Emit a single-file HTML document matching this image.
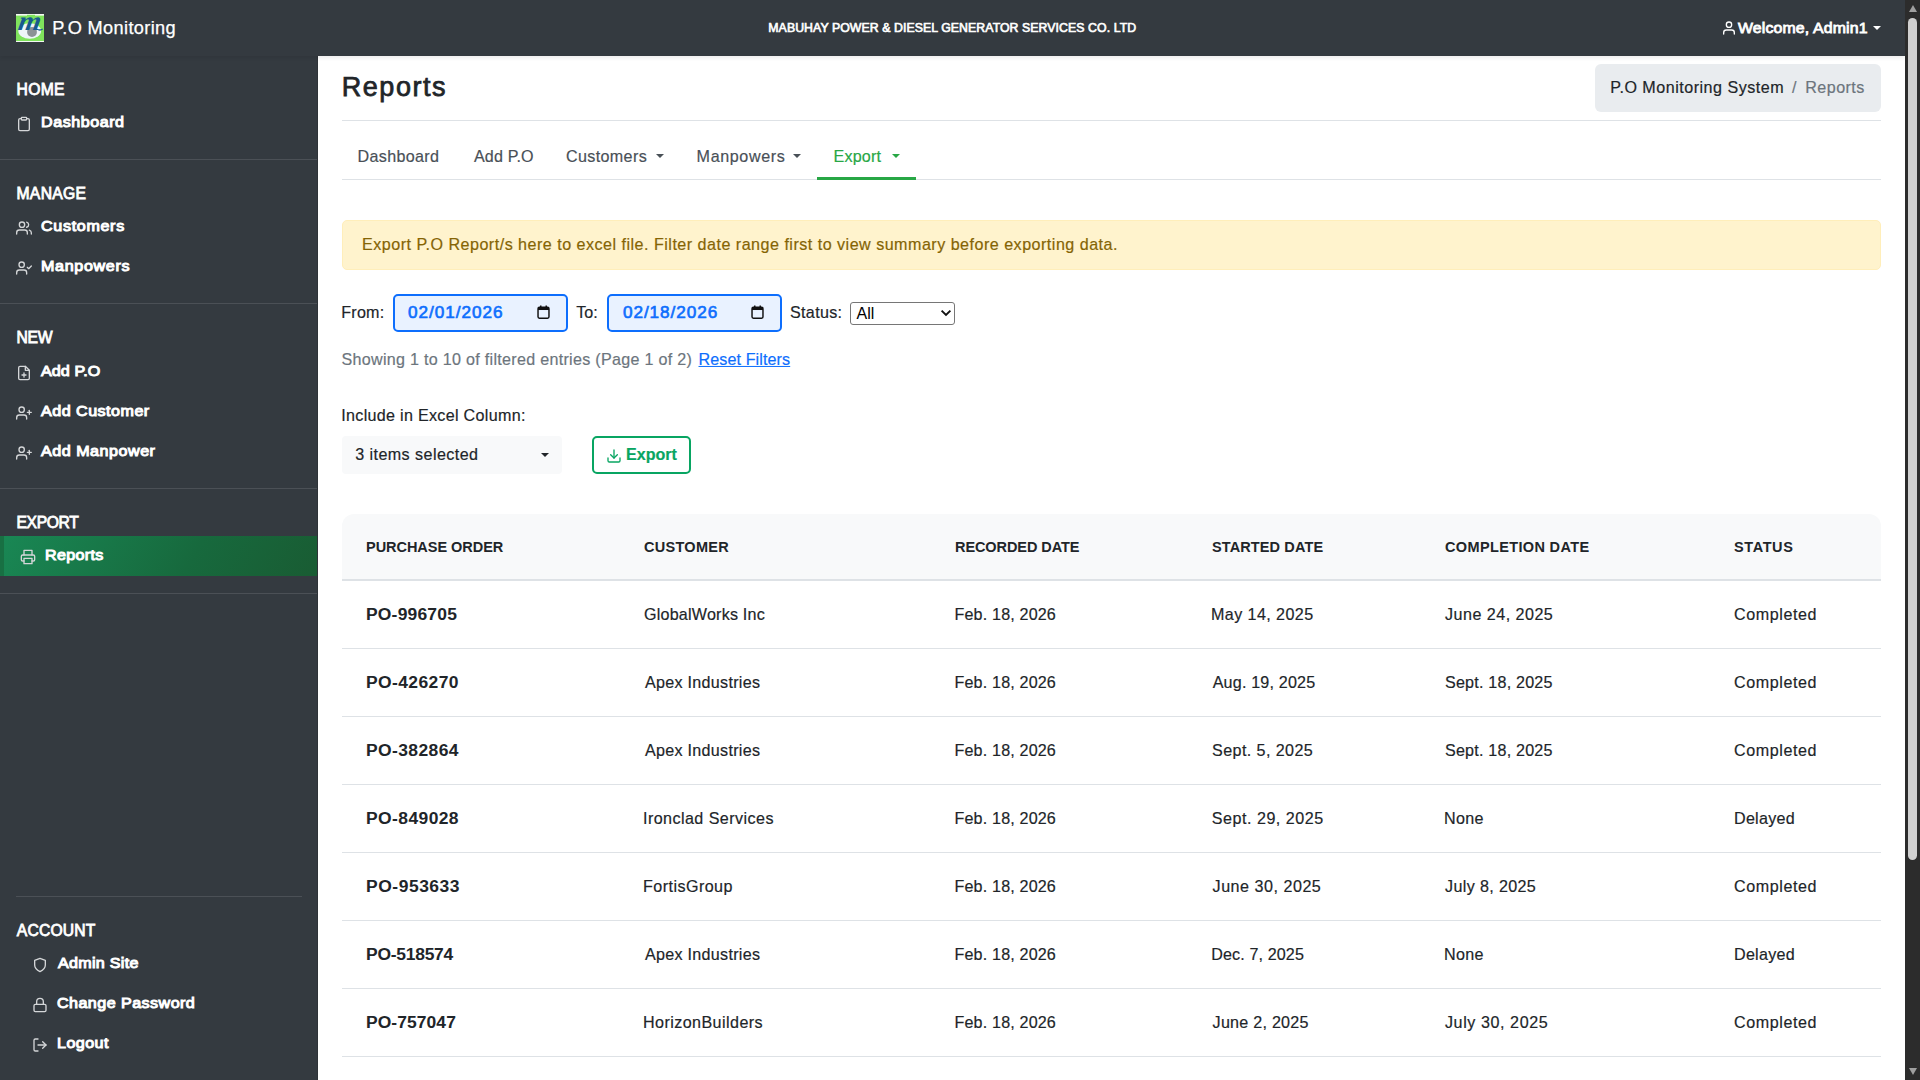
<!DOCTYPE html>
<html lang="en">
<head>
<meta charset="utf-8">
<title>Reports - P.O Monitoring</title>
<style>
*{box-sizing:border-box;margin:0;padding:0}
html,body{width:1920px;height:1080px;overflow:hidden;background:#fff}
body{font-family:"Liberation Sans",sans-serif;font-size:16px;color:#212529;position:relative}
a{text-decoration:none;color:inherit}
svg{display:block}
.abs{position:absolute}
.t{position:absolute;white-space:nowrap;line-height:1;transform:translateY(-50%) scaleX(var(--sx,1));transform-origin:0 50%}
.ic{position:absolute;fill:none;stroke-width:2;stroke-linecap:round;stroke-linejoin:round}

/* top navbar */
#nav{position:absolute;left:0;top:0;width:1905px;height:56px;background:#343a40;z-index:5;box-shadow:0 2px 4px rgba(0,0,0,.075)}
#nav .t{color:#fff}
#nav .ic{stroke:#fff}
#brand{font-size:18.2px;-webkit-text-stroke:.25px}
#company{font-size:12.3px;font-weight:400;-webkit-text-stroke:.65px}
#welcome{--sx:1.05;font-size:15.1px;font-weight:400;-webkit-text-stroke:.8px}
.caret{position:absolute;width:0;height:0;border-left:4px solid transparent;border-right:4px solid transparent;border-top:4px solid currentColor}

/* sidebar */
#side{position:absolute;left:0;top:56px;width:318px;height:1024px;background:#343a40;z-index:3;border-right:1px solid #2e3338}
#side .t{color:#fff;font-weight:400;font-size:15.1px;-webkit-text-stroke:.8px}
#side .t.hd{font-size:15.7px}
#side .t.it{--sx:1.08;margin-top:-.8px;font-size:14.9px;-webkit-text-stroke:1px}
#side .ic{stroke:#d4d6d8}
#side .hr{position:absolute;height:1px;background:#4b5056}
#active{position:absolute;left:0;top:480px;width:317px;height:40px;background:linear-gradient(120deg,#198754 0%,#17693d 60%,#195c33 100%);border-left:4px solid #187043}

/* main */
#main{position:absolute;left:318px;top:56px;width:1587px;height:1024px;background:#fff}
#main .t{color:#212529;font-size:16.1px;-webkit-text-stroke:.18px;margin-top:-.7px}
#main #statusval{font-size:16px;-webkit-text-stroke:0;letter-spacing:0!important;margin-top:0}
#main #h1,#main .dtx,#main #exporttxt{margin-top:0}
.line{position:absolute;left:24px;width:1539px;height:1px;background:#dee2e6}
#main #h1{font-size:27px;font-weight:400;-webkit-text-stroke:.75px}
#bc{position:absolute;left:1277px;top:8px;width:286px;height:48px;background:#e9ecef;border-radius:6px}
#main .tab{color:#495057}
#main .tab.on{color:#28a745}
#tabline{position:absolute;left:499px;top:121px;width:99px;height:3px;background:#28a745}
#alert{position:absolute;left:24px;top:164px;width:1539px;height:50px;background:#fff3cd;border:1px solid #ffeeba;border-radius:5px}
#main #alerttxt{color:#856404}
.date{position:absolute;top:238px;width:174.5px;height:37.5px;border:2px solid #0d6efd;border-radius:5px;background:#e9f2ff}
#main .dtx{--sx:1.1;color:#0d6efd;font-size:15.6px;font-weight:400;-webkit-text-stroke:.6px}
.cal{position:absolute;fill:none;stroke:#111;stroke-width:1.6}
#status{position:absolute;left:532px;top:246px;width:105px;height:23px;border:1px solid #767676;border-radius:3px;background:#fff}
#main #showing{color:#6c757d}
#main #reset{color:#0d6efd;text-decoration:underline}
#multi{position:absolute;left:24px;top:380px;width:220px;height:38px;background:#f8f9fa;border-radius:4px}
#export{position:absolute;left:274px;top:380px;width:99px;height:38px;border:2px solid #08a562;border-radius:5px;background:#fff}
#main #exporttxt{color:#08a562;font-weight:700;font-size:16px;-webkit-text-stroke:.2px}
#export .ic{stroke:#08a562}

/* table */
#tbl{position:absolute;left:24px;top:458px;width:1539px;border-collapse:separate;border-spacing:0;table-layout:fixed}
#tbl th{height:67px;font-size:14.5px;background:#f8f9fa;border-bottom:2px solid #dee2e6;text-align:left;font-weight:700;padding:0;vertical-align:middle;white-space:nowrap}
#tbl th:first-child{border-top-left-radius:12px}
#tbl th:last-child{border-top-right-radius:12px}
#tbl td{height:68px;border-bottom:1px solid #dee2e6;padding:0;vertical-align:middle;font-size:16.1px;white-space:nowrap;-webkit-text-stroke:.18px}
#tbl td:first-child{font-weight:700;font-size:16px;-webkit-text-stroke:0}
#tbl td:first-child .m{display:inline-block;transform:scaleX(1.09);transform-origin:0 50%}
#tbl th:nth-child(1),#tbl td:nth-child(1){padding-left:24px}

/* scrollbar */
#sb{position:absolute;left:1905px;top:0;width:15px;height:1080px;background:#2c2c2c;z-index:9}
#sb .th{position:absolute;left:3px;top:18px;width:9px;height:842px;border-radius:5px;background:#d0d0d0}
#sb .up{position:absolute;left:3.5px;top:5px;width:0;height:0;border-left:4.5px solid transparent;border-right:4.5px solid transparent;border-bottom:7px solid #a0a0a0}
#sb .dn{position:absolute;left:3.5px;top:1068px;width:0;height:0;border-left:4.5px solid transparent;border-right:4.5px solid transparent;border-top:7px solid #a0a0a0}

</style>
</head>
<body>
<nav id="nav">
<svg class="abs" style="left:16px;top:14px" width="28" height="28" viewBox="0 0 28 28">
<rect width="28" height="28" fill="#f4f8f4"/>
<rect x="0" y="1.6" width="28" height="25.4" fill="#7fe35c"/>
<rect x="11" y=".8" width="8" height="1.2" fill="#7fe35c"/>
<ellipse cx="13.7" cy="17" rx="11.4" ry="7.8" fill="#eef5f8"/>
<circle cx="16" cy="18" r="4.9" fill="#8b9296"/>
<text transform="translate(1.2,16.4) skewX(-10)" font-family="Liberation Serif,serif" font-style="italic" font-weight="700" font-size="27" textLength="22.5" lengthAdjust="spacingAndGlyphs" fill="#175a8e">m</text><path d="M22.3 15.6q2 1 4.4-.6" fill="none" stroke="#175a8e" stroke-width="1.3"/>
</svg>
<a class="t " id="brand" style="left:52.2px;top:28px;letter-spacing:0.342px;">P.O Monitoring</a>
<span class="t " id="company" style="left:768.3px;top:27.7px;letter-spacing:0.07px;">MABUHAY POWER &amp; DIESEL GENERATOR SERVICES CO. LTD</span>
<svg class="ic" style="left:1721px;top:20px" width="16" height="16" viewBox="0 0 24 24"><path d="M20 21v-2a4 4 0 0 0-4-4H8a4 4 0 0 0-4 4v2"/><circle cx="12" cy="7" r="4"/></svg>
<span class="t " id="welcome" style="left:1738.0px;top:27.5px;letter-spacing:0.143px;">Welcome, Admin1</span>
<i class="caret" style="left:1873px;top:26px;color:#fff"></i>
</nav>
<aside id="side">
<div id="active"></div>
<span class="t hd" id="s_home" style="left:16.5px;top:33.5px;letter-spacing:0.333px;">HOME</span>
<svg class="ic" style="left:16px;top:60px" width="16" height="16" viewBox="0 0 24 24"><path d="M16 4h2a2 2 0 0 1 2 2v14a2 2 0 0 1-2 2H6a2 2 0 0 1-2-2V6a2 2 0 0 1 2-2h2"/><rect x="8" y="2" width="8" height="4" rx="1" ry="1"/></svg>
<a class="t it" id="s_dash" style="left:41.0px;top:66.5px;letter-spacing:0.5px;">Dashboard</a>
<div class="hr" style="left:0px;top:103px;width:317px"></div>
<span class="t hd" id="s_manage" style="left:16.5px;top:137.5px;letter-spacing:0.3px;">MANAGE</span>
<svg class="ic" style="left:16px;top:164px" width="16" height="16" viewBox="0 0 24 24"><path d="M17 21v-2a4 4 0 0 0-4-4H5a4 4 0 0 0-4 4v2"/><circle cx="9" cy="7" r="4"/><path d="M23 21v-2a4 4 0 0 0-3-3.87"/><path d="M16 3.13a4 4 0 0 1 0 7.75"/></svg>
<a class="t it" id="s_cust" style="left:40.5px;top:170.5px;letter-spacing:0.631px;">Customers</a>
<svg class="ic" style="left:16px;top:204px" width="16" height="16" viewBox="0 0 24 24"><path d="M16 21v-2a4 4 0 0 0-4-4H5a4 4 0 0 0-4 4v2"/><circle cx="8.5" cy="7" r="4"/><polyline points="17 11 19 13 23 9"/></svg>
<a class="t it" id="s_manp" style="left:41.0px;top:210.5px;letter-spacing:0.625px;">Manpowers</a>
<div class="hr" style="left:0px;top:247px;width:317px"></div>
<span class="t hd" id="s_new" style="left:16.5px;top:281.5px;letter-spacing:-0.25px;">NEW</span>
<svg class="ic" style="left:16px;top:309px" width="16" height="16" viewBox="0 0 24 24"><path d="M14 2H6a2 2 0 0 0-2 2v16a2 2 0 0 0 2 2h12a2 2 0 0 0 2-2V8z"/><polyline points="14 2 14 8 20 8"/><line x1="12" y1="18" x2="12" y2="12"/><line x1="9" y1="15" x2="15" y2="15"/></svg>
<a class="t it" id="s_addpo" style="left:40.5px;top:315.5px;letter-spacing:0.083px;">Add P.O</a>
<svg class="ic" style="left:16px;top:349px" width="16" height="16" viewBox="0 0 24 24"><path d="M16 21v-2a4 4 0 0 0-4-4H5a4 4 0 0 0-4 4v2"/><circle cx="8.5" cy="7" r="4"/><line x1="20" y1="8" x2="20" y2="14"/><line x1="23" y1="11" x2="17" y2="11"/></svg>
<a class="t it" id="s_addcust" style="left:40.5px;top:355.5px;letter-spacing:0.455px;">Add Customer</a>
<svg class="ic" style="left:16px;top:389px" width="16" height="16" viewBox="0 0 24 24"><path d="M16 21v-2a4 4 0 0 0-4-4H5a4 4 0 0 0-4 4v2"/><circle cx="8.5" cy="7" r="4"/><line x1="20" y1="8" x2="20" y2="14"/><line x1="23" y1="11" x2="17" y2="11"/></svg>
<a class="t it" id="s_addman" style="left:40.5px;top:395.5px;letter-spacing:0.488px;">Add Manpower</a>
<div class="hr" style="left:0px;top:432px;width:317px"></div>
<span class="t hd" id="s_export" style="left:16.5px;top:466.5px;letter-spacing:-0.4px;">EXPORT</span>
<svg class="ic" style="left:20px;top:493px" width="16" height="16" viewBox="0 0 24 24"><polyline points="6 9 6 2 18 2 18 9"/><path d="M6 18H4a2 2 0 0 1-2-2v-5a2 2 0 0 1 2-2h16a2 2 0 0 1 2 2v5a2 2 0 0 1-2 2h-2"/><rect x="6" y="14" width="12" height="8"/></svg>
<a class="t it" id="s_reports" style="left:45.0px;top:499.5px;letter-spacing:0.32px;">Reports</a>
<div class="hr" style="left:0px;top:537px;width:317px"></div>
<div class="hr" style="left:16px;top:840px;width:286px"></div>
<span class="t hd" id="s_account" style="left:16.8px;top:874.5px;letter-spacing:0.166px;">ACCOUNT</span>
<svg class="ic" style="left:32px;top:901px" width="16" height="16" viewBox="0 0 24 24"><path d="M12 22s8-4 8-10V5l-8-3-8 3v7c0 6 8 10 8 10z"/></svg>
<a class="t it" id="s_admin" style="left:57.8px;top:907.5px;letter-spacing:0.264px;">Admin Site</a>
<svg class="ic" style="left:32px;top:941px" width="16" height="16" viewBox="0 0 24 24"><rect x="3" y="11" width="18" height="11" rx="2" ry="2"/><path d="M7 11V7a5 5 0 0 1 10 0v4"/></svg>
<a class="t it" id="s_chpw" style="left:57.1px;top:947.5px;letter-spacing:0.423px;">Change Password</a>
<svg class="ic" style="left:32px;top:981px" width="16" height="16" viewBox="0 0 24 24"><path d="M9 21H5a2 2 0 0 1-2-2V5a2 2 0 0 1 2-2h4"/><polyline points="16 17 21 12 16 7"/><line x1="21" y1="12" x2="9" y2="12"/></svg>
<a class="t it" id="s_logout" style="left:57.0px;top:987.5px;letter-spacing:0.4px;">Logout</a>
</aside>
<main id="main">
<h1 class="t " id="h1" style="left:23.8px;top:30.9px;letter-spacing:1.518px;">Reports</h1>
<div id="bc"></div>
<a class="t " id="bc1" style="left:1292.25px;top:31.5px;letter-spacing:0.5px;">P.O Monitoring System</a>
<span class="t " id="bc2" style="left:1474px;top:31.5px;color:#6c757d">/</span>
<span class="t " id="bc3" style="left:1487.25px;top:31.5px;letter-spacing:0.455px;color:#6c757d">Reports</span>
<div class="line" style="top:64px"></div>
<a class="t tab" id="tab1" style="left:39.6px;top:100.5px;letter-spacing:0.315px;">Dashboard</a>
<a class="t tab" id="tab2" style="left:156.0px;top:100.5px;letter-spacing:0.132px;">Add P.O</a>
<a class="t tab" id="tab3" style="left:247.9px;top:100.5px;letter-spacing:0.375px;">Customers</a>
<i class="caret" style="left:338px;top:98px;color:#495057"></i>
<a class="t tab" id="tab4" style="left:378.6px;top:100.5px;letter-spacing:0.627px;">Manpowers</a>
<i class="caret" style="left:475px;top:98px;color:#495057"></i>
<a class="t tab on" id="tab5" style="left:515.6px;top:100.5px;letter-spacing:0.18px;">Export</a>
<i class="caret" style="left:574px;top:98px;color:#28a745"></i>
<div class="line" style="top:123px"></div>
<div id="tabline"></div>
<div id="alert"></div>
<span class="t " id="alerttxt" style="left:44.0px;top:188.5px;letter-spacing:0.486px;">Export P.O Report/s here to excel file. Filter date range first to view summary before exporting data.</span>
<span class="t " id="from" style="left:23.2px;top:257px;letter-spacing:0.25px;">From:</span>
<div class="date" style="left:75px"></div>
<span class="t dtx" id="d1" style="left:90.0px;top:257px;letter-spacing:0.886px;">02/01/2026</span>
<svg class="cal" style="left:219.39999999999998px;top:249.2px" width="13" height="14.6" viewBox="0 0 14 16"><rect x="1" y="2.5" width="12" height="12" rx="1.5"/><rect x="1" y="2.5" width="12" height="3" fill="#111" stroke="none"/><line x1="4" y1="0.5" x2="4" y2="3"/><line x1="10" y1="0.5" x2="10" y2="3"/></svg>
<span class="t " id="to" style="left:258.2px;top:257px;letter-spacing:0.05px;">To:</span>
<div class="date" style="left:289px"></div>
<span class="t dtx" id="d2" style="left:304.5px;top:257px;letter-spacing:0.842px;">02/18/2026</span>
<svg class="cal" style="left:433.4px;top:249.2px" width="13" height="14.6" viewBox="0 0 14 16"><rect x="1" y="2.5" width="12" height="12" rx="1.5"/><rect x="1" y="2.5" width="12" height="3" fill="#111" stroke="none"/><line x1="4" y1="0.5" x2="4" y2="3"/><line x1="10" y1="0.5" x2="10" y2="3"/></svg>
<span class="t " id="statuslbl" style="left:472.0px;top:257px;letter-spacing:0.333px;">Status:</span>
<div id="status"></div>
<span class="t " id="statusval" style="left:538.5px;top:258px;letter-spacing:-25.9px;color:#000">All</span>
<svg class="abs" style="left:621.6px;top:253.2px" width="12" height="8" viewBox="0 0 12 8"><polyline points="1.6,1.6 6,6 10.4,1.6" fill="none" stroke="#111" stroke-width="1.9"/></svg>
<span class="t " id="showing" style="left:23.5px;top:303.5px;letter-spacing:0.291px;">Showing 1 to 10 of filtered entries (Page 1 of 2)</span>
<a class="t " id="reset" style="left:380.5px;top:303.5px;letter-spacing:0.106px;">Reset Filters</a>
<span class="t " id="include" style="left:23.25px;top:359.5px;letter-spacing:0.304px;">Include in Excel Column:</span>
<div id="multi"></div>
<span class="t " id="multitxt" style="left:37.2px;top:398.5px;letter-spacing:0.435px;">3 items selected</span>
<i class="caret" style="left:223px;top:397px;color:#212529"></i>
<div id="export">
<svg class="ic" style="left:11.5px;top:10.4px" width="16" height="16" viewBox="0 0 24 24"><path d="M21 15v4a2 2 0 0 1-2 2H5a2 2 0 0 1-2-2v-4"/><polyline points="7 10 12 15 17 10"/><line x1="12" y1="15" x2="12" y2="3"/></svg>
</div>
<span class="t " id="exporttxt" style="left:308.0px;top:398.5px;letter-spacing:0.04px;">Export</span>
<table id="tbl"><colgroup><col style="width:302px"><col style="width:311px"><col style="width:256px"><col style="width:234px"><col style="width:289px"><col style="width:147px"></colgroup>
<thead><tr><th><span class="m" id="th0" style="letter-spacing:-0.038px;">PURCHASE ORDER</span></th><th><span class="m" id="th1" style="letter-spacing:0.285px;">CUSTOMER</span></th><th><span class="m" id="th2" style="letter-spacing:-0.084px;">RECORDED DATE</span></th><th><span class="m" id="th3" style="letter-spacing:0.114px;position:relative;left:1.0px;">STARTED DATE</span></th><th><span class="m" id="th4" style="letter-spacing:0.357px;">COMPLETION DATE</span></th><th><span class="m" id="th5" style="letter-spacing:0.6px;">STATUS</span></th></tr></thead><tbody>
<tr><td><span class="m" id="c0_0" style="letter-spacing:0.191px;">PO-996705</span></td><td><span class="m" id="c0_1" style="letter-spacing:0.214px;">GlobalWorks Inc</span></td><td><span class="m" id="c0_2" style="letter-spacing:0.167px;position:relative;left:-0.5px;">Feb. 18, 2026</span></td><td><span class="m" id="c0_3" style="letter-spacing:0.418px;">May 14, 2025</span></td><td><span class="m" id="c0_4" style="letter-spacing:0.483px;">June 24, 2025</span></td><td><span class="m" id="c0_5" style="letter-spacing:0.575px;">Completed</span></td></tr>
<tr><td><span class="m" id="c1_0" style="letter-spacing:0.375px;">PO-426270</span></td><td><span class="m" id="c1_1" style="letter-spacing:0.286px;position:relative;left:1.0px;">Apex Industries</span></td><td><span class="m" id="c1_2" style="letter-spacing:0.167px;position:relative;left:-0.5px;">Feb. 18, 2026</span></td><td><span class="m" id="c1_3" style="letter-spacing:0.191px;position:relative;left:1.7px;">Aug. 19, 2025</span></td><td><span class="m" id="c1_4" style="letter-spacing:0.215px;">Sept. 18, 2025</span></td><td><span class="m" id="c1_5" style="letter-spacing:0.575px;">Completed</span></td></tr>
<tr><td><span class="m" id="c2_0" style="letter-spacing:0.375px;">PO-382864</span></td><td><span class="m" id="c2_1" style="letter-spacing:0.286px;position:relative;left:1.0px;">Apex Industries</span></td><td><span class="m" id="c2_2" style="letter-spacing:0.167px;position:relative;left:-0.5px;">Feb. 18, 2026</span></td><td><span class="m" id="c2_3" style="letter-spacing:0.416px;position:relative;left:1.0px;">Sept. 5, 2025</span></td><td><span class="m" id="c2_4" style="letter-spacing:0.215px;">Sept. 18, 2025</span></td><td><span class="m" id="c2_5" style="letter-spacing:0.575px;">Completed</span></td></tr>
<tr><td><span class="m" id="c3_0" style="letter-spacing:0.386px;">PO-849028</span></td><td><span class="m" id="c3_1" style="letter-spacing:0.437px;position:relative;left:-1.0px;">Ironclad Services</span></td><td><span class="m" id="c3_2" style="letter-spacing:0.167px;position:relative;left:-0.5px;">Feb. 18, 2026</span></td><td><span class="m" id="c3_3" style="letter-spacing:0.514px;position:relative;left:0.8px;">Sept. 29, 2025</span></td><td><span class="m" id="c3_4" style="letter-spacing:0.334px;position:relative;left:-1.0px;">None</span></td><td><span class="m" id="c3_5" style="letter-spacing:0.268px;">Delayed</span></td></tr>
<tr><td><span class="m" id="c4_0" style="letter-spacing:0.5px;">PO-953633</span></td><td><span class="m" id="c4_1" style="letter-spacing:0.45px;position:relative;left:-1.0px;">FortisGroup</span></td><td><span class="m" id="c4_2" style="letter-spacing:0.167px;position:relative;left:-0.5px;">Feb. 18, 2026</span></td><td><span class="m" id="c4_3" style="letter-spacing:0.516px;position:relative;left:1.6px;">June 30, 2025</span></td><td><span class="m" id="c4_4" style="letter-spacing:0.363px;">July 8, 2025</span></td><td><span class="m" id="c4_5" style="letter-spacing:0.575px;">Completed</span></td></tr>
<tr><td><span class="m" id="c5_0" style="letter-spacing:-0.225px;">PO-518574</span></td><td><span class="m" id="c5_1" style="letter-spacing:0.286px;position:relative;left:1.0px;">Apex Industries</span></td><td><span class="m" id="c5_2" style="letter-spacing:0.167px;position:relative;left:-0.5px;">Feb. 18, 2026</span></td><td><span class="m" id="c5_3" style="letter-spacing:0.127px;position:relative;left:0.2px;">Dec. 7, 2025</span></td><td><span class="m" id="c5_4" style="letter-spacing:0.334px;position:relative;left:-1.0px;">None</span></td><td><span class="m" id="c5_5" style="letter-spacing:0.268px;">Delayed</span></td></tr>
<tr><td><span class="m" id="c6_0" style="letter-spacing:0.073px;">PO-757047</span></td><td><span class="m" id="c6_1" style="letter-spacing:0.429px;position:relative;left:-1.0px;">HorizonBuilders</span></td><td><span class="m" id="c6_2" style="letter-spacing:0.167px;position:relative;left:-0.5px;">Feb. 18, 2026</span></td><td><span class="m" id="c6_3" style="letter-spacing:0.254px;position:relative;left:1.6px;">June 2, 2025</span></td><td><span class="m" id="c6_4" style="letter-spacing:0.575px;">July 30, 2025</span></td><td><span class="m" id="c6_5" style="letter-spacing:0.575px;">Completed</span></td></tr>
<tr><td><span class="m" id="c7_0" style="letter-spacing:0.191px;">PO-664213</span></td><td><span class="m" id="c7_1" style="letter-spacing:0.286px;position:relative;left:1.0px;">Apex Industries</span></td><td><span class="m" id="c7_2" style="letter-spacing:0.167px;position:relative;left:-0.5px;">Feb. 18, 2026</span></td><td><span class="m" id="c7_3">July 11, 2025</span></td><td><span class="m" id="c7_4">Aug. 2, 2025</span></td><td><span class="m" id="c7_5" style="letter-spacing:0.575px;">Completed</span></td></tr>
</tbody></table>
</main>
<div id="sb"><div class="up"></div><div class="th"></div><div class="dn"></div></div>
</body>
</html>
